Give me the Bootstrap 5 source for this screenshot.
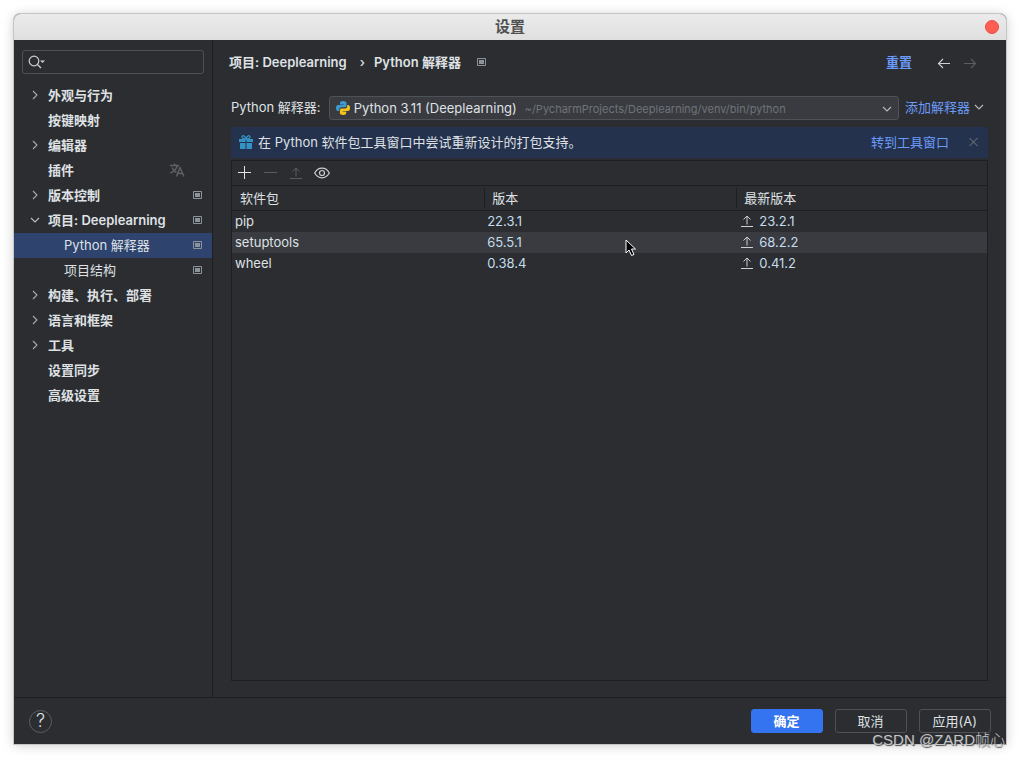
<!DOCTYPE html>
<html lang="zh-CN">
<head>
<meta charset="utf-8">
<meta name="viewport" content="width=device-width, initial-scale=1">
<title>设置</title>
<link href="https://cdn.jsdelivr.net/npm/bootstrap@5.3.0/dist/css/bootstrap.min.css" rel="stylesheet">
<style>
  :root { --bg: #2b2d30; --line: #1e1f22; --fg: #dfe1e5; --muted: #6f737a; --link: #6b9bfa; --edge: #4e5157; }
  body { background: #fff; font-family: Inter, "Noto Sans CJK SC", sans-serif; font-size: 13px; line-height: 20px; color: var(--fg); padding: 14px; }
  .app-window { background: var(--bg); border-radius: 6px 6px 0 0; box-shadow: 0 0 0 1px #c6c6c8, 0 1px 12px rgba(0,0,0,.22); }
  .titlebar { height: 26px; background: linear-gradient(#ebebeb, #dfdfdf); color: #505050; font-size: 15px; font-weight: 600; border-radius: 6px 6px 0 0; }
  .close-dot { width: 14px; height: 14px; right: 7px; top: 6px; background: #ff5f52; border: 1px solid #e8503f; border-radius: 50%; }
  .sidebar { width: 199px; border-right: 1px solid var(--line); padding-top: 10px; }
  .search-wrap { margin: 0 8px 9px; }
  .search-wrap svg { left: 6px; top: 4px; }
  .search-input { display: block; width: 100%; height: 24px; background: transparent; border: 1px solid var(--edge); border-radius: 3px; color: var(--fg); padding: 0 6px 0 26px; }
  .tree a { display: flex; align-items: center; height: 25px; padding: 0 10px 1px 16px; color: var(--fg); text-decoration: none; font-weight: 600; line-height: 18px; }
  .tree .twist { width: 10px; margin-right: 8px; display: flex; justify-content: center; }
  .tree a.child { padding-left: 50px; font-weight: 400; }
  .tree a.active { background: #2e436e; }
  .tree .proj { margin-left: auto; }
  .tree .lang { margin-left: auto; margin-right: 17px; }
  svg { display: block; flex: none; }
  .page-head { height: 44px; padding: 0 28px 0 16px; font-weight: 600; }
  .crumb-sep { margin: 0 9px 0 13px; font-weight: 500; }
  .arrows { gap: 10px; }
  .page-body { padding: 0 18px 16px; }
  .plain-btn { background: none; border: 0; padding: 0; color: inherit; display: flex; align-items: center; }
  .plain-btn:disabled { color: #5a5d63; }
  a.blue { color: var(--link); text-decoration: none; }
  .interp { margin-top: 12px; height: 24px; }
  .interp label, .add-link { line-height: 18px; padding-bottom: 2px; }
  .add-link { margin: 0 4px 0 6px; }
  .interp-select { display: block; appearance: none; width: 100%; height: 24px; background: #393b40; border: 1px solid var(--edge); border-radius: 3px; color: var(--fg); padding: 0 24px 0 24px; }
  .snake { left: 6px; top: 4px; }
  .venv { left: 196px; top: 3px; font-size: 11px; color: var(--muted); pointer-events: none; white-space: nowrap; }
  .caret { right: 7px; top: 8px; pointer-events: none; }
  .notice { margin: 7px 0 2px; height: 31px; background: #25324d; padding: 0 10px 1px 8px; }
  .notice-text { margin-left: 5px; }
  .packages { border: 1px solid var(--line); }
  .tools { height: 25px; border-bottom: 1px solid var(--line); padding: 0 4px; gap: 10px; }
  .tools .up-btn { padding: 0 2px; }
  .pkg { width: 100%; table-layout: fixed; border-collapse: separate; border-spacing: 0; }
  .pkg th { height: 25px; padding: 2px 0; border-bottom: 1px solid var(--line); font-weight: 400; }
  .pkg th:nth-child(-n+2) { width: 33.4%; }
  .pkg th span { display: block; padding-left: 8px; }
  .pkg th + th span { border-left: 1px solid var(--line); padding-left: 7px; }
  .pkg td { height: 21px; padding: 0 3px; line-height: 21px; }
  .pkg td + td { color: #c4dcec; }
  .pkg td:last-child { padding-left: 5px; }
  .pkg tr.hovered td { background: #393b40; }
  .latest { display: flex; align-items: center; gap: 6px; }
  .latest svg { color: #ced0d6; margin-bottom: 1px; }
  .app-foot { height: 47px; border-top: 1px solid var(--line); padding: 0 15px; gap: 12px; }
  .help { width: 23px; height: 23px; border: 1px solid #5a5d63; border-radius: 50%; background: none; color: var(--fg); font-size: 18px; font-weight: 300; line-height: 20px; padding: 0; }
  .dlg-btn { min-width: 72px; height: 24px; font-size: 13px; line-height: 20px; padding: 0 13px; border: 1px solid var(--edge); border-radius: 3px; color: var(--fg); background: transparent; }
  .dlg-btn.primary { background: #3574f0; border-color: #3574f0; color: #fff; font-weight: 600; }
  .watermark { right: 1px; bottom: -6px; font: 300 15px/20px "Liberation Sans", "Noto Sans CJK SC", sans-serif; color: #c4c5c8; text-shadow: 1px 1px 1px #444; pointer-events: none; }
  .pointer { left: 61.6%; top: 225px; }
</style>
</head>
<body class="min-vh-100 d-flex flex-column">
<svg width="0" height="0" class="position-absolute" aria-hidden="true">
  <symbol id="right" viewBox="0 0 10 10"><path d="M3 1l4 4-4 4" fill="none" stroke="#a8abb0" stroke-width="1.1"/></symbol>
  <symbol id="down" viewBox="0 0 10 10"><path d="M1 3l4 4 4-4" fill="none" stroke="#b9bcc1" stroke-width="1.1"/></symbol>
  <symbol id="proj" viewBox="0 0 9 8"><path d="M.5.5h8v7h-8z" fill="none" stroke="#8b949b"/><path d="M2 2h5v4H2z" fill="#8b949b"/></symbol>
  <symbol id="up" viewBox="0 0 12 12"><path d="M6 9.500V1M2.500 4.500L6 1l3.500 3.500M0 11.500h12" fill="none" stroke="currentColor"/></symbol>
</svg>
<div class="app-window flex-grow-1 d-flex flex-column position-relative">
  <header class="titlebar position-relative d-flex align-items-center justify-content-center">
    <span>设置</span>
    <button class="close-dot position-absolute p-0" aria-label="关闭"></button>
  </header>
  <div class="d-flex flex-grow-1">
    <aside class="sidebar flex-shrink-0">
      <div class="search-wrap position-relative">
        <input class="search-input" type="search" aria-label="搜索设置">
        <svg class="position-absolute" width="18" height="16" viewBox="0 0 18 16" fill="none" stroke="#ced0d6" stroke-width="1.2"><circle cx="6" cy="7" r="4.800"/><path d="M9.500 10.500l3.500 3.500"/><path d="M12 6.500h5L14.500 9z" fill="#ced0d6" stroke="none"/></svg>
      </div>
      <nav class="tree">
        <a href="#"><span class="twist"><svg width="10" height="10"><use href="#right"/></svg></span>外观与行为</a>
        <a href="#"><span class="twist"></span>按键映射</a>
        <a href="#"><span class="twist"><svg width="10" height="10"><use href="#right"/></svg></span>编辑器</a>
        <a href="#"><span class="twist"></span>插件<svg class="lang" width="15" height="14" viewBox="0 0 15 14" fill="none" stroke="#5f6268" stroke-width="1.4"><path d="M0 2.500h9M4.500.5v2M7.500 2.500C6.500 6 4 8.500.5 10M2 4.500C3 7 4.500 8.500 6.500 9.500M6.500 13.500l3.500-9 4 9M8 10.500h4.500"/></svg></a>
        <a href="#"><span class="twist"><svg width="10" height="10"><use href="#right"/></svg></span>版本控制<svg class="proj" width="9" height="8"><use href="#proj"/></svg></a>
        <a href="#"><span class="twist"><svg width="10" height="10"><use href="#down"/></svg></span>项目: Deeplearning<svg class="proj" width="9" height="8"><use href="#proj"/></svg></a>
        <a href="#" class="child active" aria-current="page">Python 解释器<svg class="proj" width="9" height="8"><use href="#proj"/></svg></a>
        <a href="#" class="child">项目结构<svg class="proj" width="9" height="8"><use href="#proj"/></svg></a>
        <a href="#"><span class="twist"><svg width="10" height="10"><use href="#right"/></svg></span>构建、执行、部署</a>
        <a href="#"><span class="twist"><svg width="10" height="10"><use href="#right"/></svg></span>语言和框架</a>
        <a href="#"><span class="twist"><svg width="10" height="10"><use href="#right"/></svg></span>工具</a>
        <a href="#"><span class="twist"></span>设置同步</a>
        <a href="#"><span class="twist"></span>高级设置</a>
      </nav>
    </aside>
    <main class="flex-grow-1 d-flex flex-column">
      <div class="page-head d-flex align-items-center">
        <span>项目: Deeplearning</span><span class="crumb-sep">›</span><span>Python 解释器</span>
        <svg class="ms-3" width="9" height="8"><use href="#proj"/></svg>
        <a href="#" class="blue ms-auto">重置</a>
        <div class="arrows d-flex ms-4 pt-1">
          <button class="plain-btn" aria-label="后退"><svg width="16" height="12" viewBox="0 0 16 12" fill="none" stroke="#ced0d6" stroke-width="1.1"><path d="M14 5.500H3M7 1L2.500 5.500 7 10"/></svg></button>
          <button class="plain-btn" aria-label="前进" disabled><svg width="16" height="12" viewBox="0 0 16 12" fill="none" stroke="#5a5d63" stroke-width="1.1"><path d="M2 5.500h11M9 1l4.500 4.500L9 10"/></svg></button>
        </div>
      </div>
      <div class="page-body flex-grow-1 d-flex flex-column">
        <div class="interp d-flex align-items-center">
          <label for="interp" class="me-2">Python 解释器:</label>
          <div class="position-relative flex-grow-1">
            <select id="interp" class="interp-select"><option>Python 3.11 (Deeplearning)</option></select>
            <svg class="snake position-absolute" width="16" height="16" viewBox="0 0 16 16"><path d="M8 1C5.500 1 5 2 5 3v1.500h3.500V5H3.300C1.800 5 1 6.300 1 8s.8 3 2 3h1.200V9.300C4.200 8 5.200 7.300 6.300 7.300h3.500c1 0 1.700-.7 1.700-1.600V3c0-1.200-1-2-3.500-2z" fill="#3d9ad1"/><path d="M8.200 15c2.500 0 3-1 3-2v-1.500H7.700V11h5.200C14.400 11 15 9.700 15 8s-.7-3-2-3h-.8v1.400c0 1.200-1 2-2 2H6.600c-1 0-1.700.7-1.700 1.600v3c0 1.200 1 2 3.300 2z" fill="#f2c31b"/></svg>
            <span class="venv position-absolute">~/PycharmProjects/Deeplearning/venv/bin/python</span>
            <svg class="caret position-absolute" width="10" height="10"><use href="#down"/></svg>
          </div>
          <a href="#" class="blue add-link d-flex align-items-center">添加解释器<svg class="ms-1" width="10" height="10"><use href="#down"/></svg></a>
        </div>
        <div class="notice d-flex align-items-center">
          <svg width="14" height="14" viewBox="0 0 14 14"><path d="M0 4h6.500v3H0zM7.500 4H14v3H7.500zM1 8h5.500v6H1zM7.500 8H13v6H7.500z" fill="#3592c4"/><path d="M7 4C4 4 2.500 3 3 1.500S6 .5 7 4c1-3.500 3.500-4 4-2.500S10 4 7 4z" fill="none" stroke="#3592c4" stroke-width="1.200"/></svg>
          <span class="notice-text">在 Python 软件包工具窗口中尝试重新设计的打包支持。</span>
          <a href="#" class="blue ms-auto">转到工具窗口</a>
          <button class="plain-btn ms-3 ps-1" aria-label="关闭通知"><svg width="9" height="10" viewBox="0 0 9 10" stroke="#787c84"><path d="M.5 1l8 8M8.500 1l-8 8"/></svg></button>
        </div>
        <section class="packages flex-grow-1">
          <div class="tools d-flex align-items-center">
            <button class="plain-btn" aria-label="安装"><svg width="16" height="16" viewBox="0 0 16 16" stroke="#dfe1e5"><path d="M2 7.500h13M8.500 1v13"/></svg></button>
            <button class="plain-btn" aria-label="卸载" disabled><svg width="16" height="16" viewBox="0 0 16 16" stroke="#5a5d63"><path d="M2 7.500h13"/></svg></button>
            <button class="plain-btn up-btn" aria-label="升级" disabled><svg width="12" height="12"><use href="#up"/></svg></button>
            <button class="plain-btn" aria-label="显示早期版本"><svg width="16" height="16" viewBox="0 0 16 16" fill="none" stroke="#ced0d6" stroke-width="1.200"><path d="M.7 8C2.300 5 5 3.200 8 3.200S13.700 5 15.300 8C13.700 11 11 12.800 8 12.800S2.300 11 .7 8z"/><circle cx="8" cy="8" r="2.500"/></svg></button>
          </div>
          <table class="pkg">
            <thead><tr><th><span>软件包</span></th><th><span>版本</span></th><th><span>最新版本</span></th></tr></thead>
            <tbody>
              <tr><td>pip</td><td>22.3.1</td><td><span class="latest"><svg width="12" height="12"><use href="#up"/></svg>23.2.1</span></td></tr>
              <tr class="hovered"><td>setuptools</td><td>65.5.1</td><td><span class="latest"><svg width="12" height="12"><use href="#up"/></svg>68.2.2</span></td></tr>
              <tr><td>wheel</td><td>0.38.4</td><td><span class="latest"><svg width="12" height="12"><use href="#up"/></svg>0.41.2</span></td></tr>
            </tbody>
          </table>
        </section>
      </div>
    </main>
  </div>
  <footer class="app-foot d-flex align-items-center">
    <button class="help me-auto" aria-label="帮助">?</button>
    <button class="dlg-btn primary">确定</button>
    <button class="dlg-btn">取消</button>
    <button class="dlg-btn">应用(A)</button>
  </footer>
  <svg class="pointer position-absolute" width="12" height="18" viewBox="0 0 12 18"><path d="M1 1v13l3-3 2.500 5.500 2.500-1L6.500 10H10.500z" fill="#000" stroke="#fff"/></svg>
  <span class="watermark position-absolute">CSDN @ZARD帧心</span>
</div>
<script src="https://cdn.jsdelivr.net/npm/bootstrap@5.3.0/dist/js/bootstrap.bundle.min.js"></script>
</body>
</html>
